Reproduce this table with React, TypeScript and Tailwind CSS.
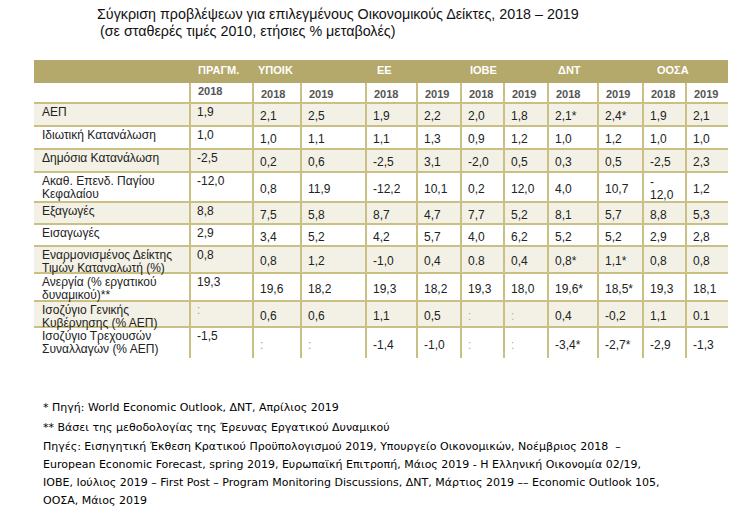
const widths = ['w-[155px]', 'w-[63px]', 'w-[48px]', 'w-[65px]', 'w-[51px]', 'w-[44px]', 'w-[43px]', 'w-[44px]', 'w-[50px]', 'w-[45px]', 'w-[43px]', 'w-[43px]'];

type Row = { label: React.ReactNode; h: string; values: React.ReactNode[]; beige: boolean };

const pink = <span className="text-[#e39a9a]">:</span>;
const grey = <span className="text-[#9a9a9a]">:</span>;

const rows: Row[] = [
  { label: 'ΑΕΠ', h: 'h-[23px]', beige: true, values: ['1,9', '2,1', '2,5', '1,9', '2,2', '2,0', '1,8', '2,1*', '2,4*', '1,9', '2,1'] },
  { label: 'Ιδιωτική Κατανάλωση', h: 'h-[23px]', beige: false, values: ['1,0', '1,0', '1,1', '1,1', '1,3', '0,9', '1,2', '1,0', '1,2', '1,0', '1,0'] },
  { label: 'Δημόσια Κατανάλωση', h: 'h-[23px]', beige: true, values: ['-2,5', '0,2', '0,6', '-2,5', '3,1', '-2,0', '0,5', '0,3', '0,5', '-2,5', '2,3'] },
  {
    label: <>Ακαθ. Επενδ. Παγίου<br />Κεφαλαίου</>, h: 'h-[30px]', beige: false,
    values: ['-12,0', '0,8', '11,9', '-12,2', '10,1', '0,2', '12,0', '4,0', '10,7', <>-<br />12,0</>, '1,2'],
  },
  { label: 'Εξαγωγές', h: 'h-[22px]', beige: true, values: ['8,8', '7,5', '5,8', '8,7', '4,7', '7,7', '5,2', '8,1', '5,7', '8,8', '5,3'] },
  { label: 'Εισαγωγές', h: 'h-[22px]', beige: false, values: ['2,9', '3,4', '5,2', '4,2', '5,7', '4,0', '6,2', '5,2', '5,2', '2,9', '2,8'] },
  {
    label: <>Εναρμονισμένος Δείκτης<br />Τιμών Καταναλωτή (%)</>, h: 'h-[27px]', beige: true,
    values: ['0,8', '0,8', '1,2', '-1,0', '0,4', '0.8', '0,4', '0,8*', '1,1*', '0,8', '0,8'],
  },
  {
    label: <>Ανεργία (% εργατικού<br />δυναμικού)**</>, h: 'h-[28px]', beige: false,
    values: ['19,3', '19,6', '18,2', '19,3', '18,2', '19,3', '18,0', '19,6*', '18,5*', '19,3', '18,1'],
  },
  {
    label: <>Ισοζύγιο Γενικής<br />Κυβέρνησης (% ΑΕΠ)</>, h: 'h-[26px]', beige: true,
    values: [grey, '0,6', '0,6', '1,1', '0,5', pink, pink, '0,4', '-0,2', '1,1', '0.1'],
  },
  {
    label: <>Ισοζύγιο Τρεχουσών<br />Συναλλαγών (% ΑΕΠ)</>, h: 'h-[30px]', beige: false,
    values: ['-1,5', grey, grey, '-1,4', '-1,0', pink, pink, '-3,4*', '-2,7*', '-2,9', '-1,3'],
  },
];

const years = ['2018', '2018', '2019', '2018', '2019', '2018', '2019', '2018', '2019', '2018', '2019'];

export default function App() {
  return (
    <div className="w-[753px] h-[530px] bg-white text-[#222] font-['Liberation_Sans',Arial,sans-serif] overflow-hidden">
      <div className="pt-[6px] pl-[97px] text-[14.3px] leading-[17px] text-[#111]">
        <p>Σύγκριση προβλέψεων για επιλεγμένους Οικονομικούς Δείκτες, 2018 – 2019</p>
        <p className="pl-[3px]">(σε σταθερές τιμές 2010, ετήσιες % μεταβολές)</p>
      </div>

      <div className="ml-[34px] mt-[20px] w-[694px]">
        <div className="flex h-[23px] bg-[#b4a96b] text-white font-bold text-[11px] leading-[14px]">
          <div className="w-[155px]" />
          <div className="w-[63px] pl-[9px] pt-[3px]">ΠΡΑΓΜ.</div>
          <div className="w-[113px] pl-[6px] pt-[3px]">ΥΠΟΙΚ</div>
          <div className="w-[95px] pl-[12px] pt-[3px]">ΕΕ</div>
          <div className="w-[87px] pl-[10px] pt-[3px]">ΙΟΒΕ</div>
          <div className="w-[95px] pl-[11px] pt-[3px]">ΔΝΤ</div>
          <div className="w-[86px] pl-[15px] pt-[3px]">ΟΟΣΑ</div>
        </div>

        <div className="flex h-[21px] border-b-2 border-[#cbc084] text-[11px] font-bold text-[#555] leading-[14px]">
          <div className={widths[0]} />
          {years.map((y, i) => (
            <div
              key={i}
              className={`${widths[i + 1]} border-l-2 border-[#cbc084] pl-[7px] flex ${i === 0 ? 'items-start pt-[1px]' : 'items-center pt-[2px]'}`}
            >
              {y}
            </div>
          ))}
        </div>

        {rows.map((r, ri) => (
          <div
            key={ri}
            className={`flex ${r.h} ${r.beige ? 'bg-[#f3f1e5]' : 'bg-white'} ${ri < rows.length - 1 ? 'border-b-2' : ''} border-[#cbc084] text-[12px] leading-[13px]`}
          >
            <div className={`${widths[0]} pl-[8px] pt-[2px]`}>{r.label}</div>
            {r.values.map((v, i) => (
              <div
                key={i}
                className={`${widths[i + 1]} border-l-2 border-[#cbc084] pl-[6px] flex ${i === 0 ? 'items-start pt-[2px]' : 'items-center pt-[4px]'}`}
              >
                <div>{v}</div>
              </div>
            ))}
          </div>
        ))}
      </div>

      <div className="mt-[41px] pl-[43px] pr-[8px] text-[11px] leading-[18px] text-black font-['DejaVu_Sans',Tahoma,sans-serif]">
        <p>* Πηγή: World Economic Outlook, ΔΝΤ, Απρίλιος 2019</p>
        <p className="mt-[2px]">** Βάσει της μεθοδολογίας της Έρευνας Εργατικού Δυναμικού</p>
        <p className="mt-[1px] w-[700px]">
          Πηγές: Εισηγητική Έκθεση Κρατικού Προϋπολογισμού 2019, Υπουργείο Οικονομικών, Νοέμβριος 2018 &nbsp;–<br />
          European Economic Forecast, spring 2019, Ευρωπαϊκή Επιτροπή, Μάιος 2019 - Η Ελληνική Οικονομία 02/19,<br />
          ΙΟΒΕ, Ιούλιος 2019 – First Post – Program Monitoring Discussions, ΔΝΤ, Μάρτιος 2019 –– Economic Outlook 105,<br />
          ΟΟΣΑ, Μάιος 2019
        </p>
      </div>
    </div>
  );
}
